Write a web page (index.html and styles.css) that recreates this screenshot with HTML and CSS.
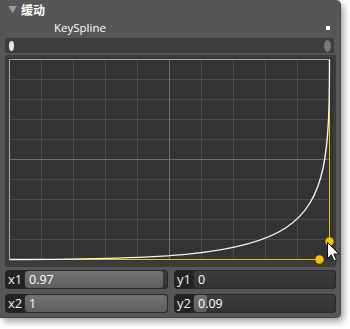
FILE: index.html
```html
<!DOCTYPE html>
<html lang="zh">
<head>
    <meta charset="UTF-8">
    <title>缓动 - KeySpline</title>
    <link rel="stylesheet" href="styles.css">
</head>
<body>
    <div class="panel">
        <div class="section-head">
            <span class="arrow">&#9660;</span>
            <span class="section-title">缓动</span>
        </div>
        <div class="prop-row">
            <span class="prop-name">KeySpline</span>
            <span class="marker"></span>
        </div>

        <div class="track">
            <span class="knob knob-left"></span>
            <span class="knob knob-right"></span>
        </div>

        <div class="graph-frame">
            <svg class="graph" width="324" height="203" viewBox="0 0 324 203">
                <g stroke="#4b4b4b" stroke-width="1">
                    <line x1="32.5" y1="1" x2="32.5" y2="202"/>
                    <line x1="64.5" y1="1" x2="64.5" y2="202"/>
                    <line x1="96.5" y1="1" x2="96.5" y2="202"/>
                    <line x1="128.5" y1="1" x2="128.5" y2="202"/>
                    <line x1="192.5" y1="1" x2="192.5" y2="202"/>
                    <line x1="224.5" y1="1" x2="224.5" y2="202"/>
                    <line x1="256.5" y1="1" x2="256.5" y2="202"/>
                    <line x1="288.5" y1="1" x2="288.5" y2="202"/>
                    <line x1="0" y1="21.5" x2="320" y2="21.5"/>
                    <line x1="0" y1="41.5" x2="320" y2="41.5"/>
                    <line x1="0" y1="61.5" x2="320" y2="61.5"/>
                    <line x1="0" y1="81.5" x2="320" y2="81.5"/>
                    <line x1="0" y1="121.5" x2="320" y2="121.5"/>
                    <line x1="0" y1="141.5" x2="320" y2="141.5"/>
                    <line x1="0" y1="161.5" x2="320" y2="161.5"/>
                    <line x1="0" y1="181.5" x2="320" y2="181.5"/>
                </g>
                <g stroke="#6e6e6e" stroke-width="1">
                    <line x1="160.5" y1="1" x2="160.5" y2="202"/>
                    <line x1="0" y1="101.5" x2="320" y2="101.5"/>
                </g>
                <polyline points="0.5,201.5 0.5,1.5 320.5,1.5" fill="none" stroke="#a9a9a9" stroke-width="1"/>
                <line x1="0.5" y1="201.5" x2="310.5" y2="201.5" stroke="#f2c200" stroke-width="1"/>
                <line x1="320.5" y1="1.5" x2="320.5" y2="183.5" stroke="#f2c200" stroke-width="1"/>
                <path d="M0.5,201.5 C310.9,201.5 320.5,183.5 320.5,1.5" fill="none" stroke="#f4f4f4" stroke-width="1.4"/>
                <circle cx="310.5" cy="201.5" r="4.2" fill="#f5c400"/>
                <circle cx="320.5" cy="183.5" r="4.2" fill="#f5c400"/>
            </svg>
            <svg class="cursor" width="13" height="21" viewBox="0 0 13 21">
                <path d="M0.5,0.5 L0.5,16.5 L4.3,12.8 L7,19 L9.4,18 L6.8,12 L12,12 Z" fill="#fff" stroke="#111" stroke-width="1" stroke-linejoin="round"/>
            </svg>
        </div>

        <div class="fields">
            <div class="field">
                <span class="field-label">x1</span>
                <div class="field-input">
                    <span class="fill" style="width: 97%"></span>
                    <span class="field-value">0.97</span>
                </div>
            </div>
            <div class="field">
                <span class="field-label">y1</span>
                <div class="field-input">
                    <span class="fill" style="width: 0%"></span>
                    <span class="field-value">0</span>
                </div>
            </div>
            <div class="field">
                <span class="field-label">x2</span>
                <div class="field-input">
                    <span class="fill" style="width: 100%"></span>
                    <span class="field-value">1</span>
                </div>
            </div>
            <div class="field">
                <span class="field-label">y2</span>
                <div class="field-input">
                    <span class="fill" style="width: 9%"></span>
                    <span class="field-value">0.09</span>
                </div>
            </div>
        </div>
    </div>
</body>
</html>
```

FILE: styles.css
```css
* {
    margin: 0;
    padding: 0;
    box-sizing: border-box;
}

body {
    background: #ffffff;
    font-family: "Open Sans", "Noto Sans", "Noto Sans CJK SC", sans-serif;
    color: #ffffff;
    width: 350px;
    height: 329px;
    overflow: hidden;
}

.panel {
    width: 341px;
    height: 318px;
    background: #565656;
    border-right: 1px solid #444;
    border-bottom: 1px solid #444;
    border-radius: 0 5px 5px 0;
    box-shadow: 3px 4px 6px rgba(0,0,0,0.35);
    display: flex;
    flex-direction: column;
}

.section-head {
    height: 19px;
    display: flex;
    align-items: center;
    padding-left: 8px;
}

.arrow {
    font-size: 9px;
    color: #9a9a9a;
    width: 13px;
}

.section-title {
    font-family: "Noto Sans CJK SC", sans-serif;
    font-weight: bold;
    font-size: 12px;
    line-height: 14px;
}

.prop-row {
    height: 17px;
    display: flex;
    align-items: center;
    justify-content: space-between;
    padding: 0 10px 0 54px;
}

.prop-name {
    font-size: 11.5px;
    line-height: 14px;
}

.marker {
    width: 4px;
    height: 4px;
    background: #ffffff;
}

.track {
    height: 15px;
    margin: 2px 6px 0 5px;
    background: #3d3d3d;
    border-radius: 2px;
    display: flex;
    align-items: center;
    justify-content: space-between;
    padding: 0 3px 0 4px;
}

.knob {
    display: block;
    border-radius: 50%;
}

.knob-left {
    width: 5px;
    height: 10px;
    background: #e8e8e8;
}

.knob-right {
    width: 7px;
    height: 12px;
    background: #777777;
}

.graph-frame {
    position: relative;
    width: 331px;
    height: 212px;
    margin: 2px 0 0 5px;
    background: #3c3c3c;
    border-radius: 2px;
    padding: 3px 0 0 4px;
}

.graph {
    display: block;
    background: #333333;
    overflow: visible;
}

.cursor {
    position: absolute;
    left: 322px;
    top: 187px;
}

.fields {
    display: grid;
    grid-template-columns: 163px 162px;
    column-gap: 6px;
    row-gap: 5px;
    margin: 3px 0 0 5px;
}

.field {
    display: flex;
    height: 19px;
    background: #232323;
    border-radius: 4px;
}

.field-label {
    width: 19px;
    font-size: 13px;
    line-height: 19px;
    padding-left: 3px;
    color: #f0f0f0;
}

.field-input {
    position: relative;
    flex: 1;
    background: linear-gradient(#3d3d3d, #323232);
    border: 1px solid #2a2a2a;
    border-radius: 4px;
    overflow: hidden;
}

.fill {
    position: absolute;
    left: 0;
    top: 0;
    bottom: 0;
    background: linear-gradient(#727272, #5e5e5e);
    border-radius: 3px;
}

.field-value {
    position: relative;
    display: block;
    font-size: 12.5px;
    line-height: 17px;
    padding-left: 4px;
}
```
